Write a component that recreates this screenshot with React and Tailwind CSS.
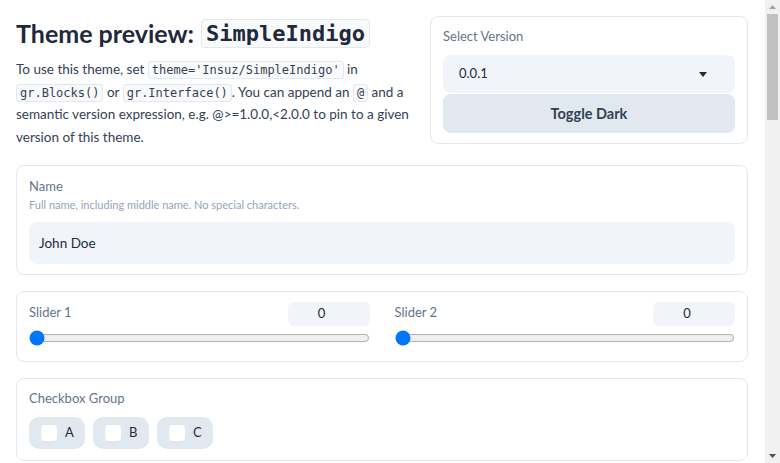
import React from "react";

const font = { fontFamily: "Lato, 'Noto Sans', sans-serif" };

function Code({ children, big }) {
  return (
    <code
      className={
        big
          ? "inline-block rounded-[4px] border border-[#e2e8f0] bg-[#f8fafc] px-[4px] text-[22px] leading-[27px] font-semibold text-[#1e293b]"
          : "rounded-[3px] border border-[#e2e8f0] bg-[#f8fafc] px-[3px] py-[1px] text-[12px] leading-[14px] text-[#374151]"
      }
      style={{ fontFamily: "'DejaVu Sans Mono', 'Liberation Mono', monospace" }}
    >
      {children}
    </code>
  );
}

function Card({ children, className = "" }) {
  return (
    <div className={"rounded-lg border border-[#e2e8f0] bg-white " + className}>
      {children}
    </div>
  );
}

function Label({ children }) {
  return <div className="text-[13px] leading-5 text-[#64748b]">{children}</div>;
}

function SliderBlock({ label }) {
  return (
    <div className="flex flex-col">
      <div className="flex h-6 items-start justify-between">
        <Label>{label}</Label>
        <div className="flex h-6 w-[82px] items-center justify-center rounded-md bg-[#f1f5f9] pr-[14px] text-[13px] text-[#1e293b]">
          0
        </div>
      </div>
      <input
        type="range"
        min="0"
        max="100"
        defaultValue="0"
        className="m-0 mt-1 block h-4 w-full"
      />
    </div>
  );
}

function Chip({ letter }) {
  return (
    <div className="flex h-8 w-14 items-center gap-2 rounded-[10px] bg-[#e2e8f0] pl-3">
      <div className="h-4 w-4 rounded-[4px] bg-white" />
      <span className="text-[13px] text-[#1e293b]">{letter}</span>
    </div>
  );
}

export default function App() {
  return (
    <div className="flex h-[463px] w-[780px] overflow-hidden bg-white" style={font}>
      <main className="flex w-[765px] flex-col gap-4 pl-4 pr-[17px] pt-4">
        <div className="grid grid-cols-[398px_318px] items-start gap-4">
          <div className="h-[133px]">
            <h1 className="flex h-[35px] items-center gap-[7px] text-[25px] font-bold text-[#1e293b]">
              <span>Theme preview:</span>
              <Code big>SimpleIndigo</Code>
            </h1>
            <p className="mt-[7px] text-[13.5px] leading-[22.7px] text-[#334155]">
              To use this theme, set <Code>theme='Insuz/SimpleIndigo'</Code> in
              <br />
              <Code>gr.Blocks()</Code> or <Code>gr.Interface()</Code>. You can append an{" "}
              <Code>@</Code> and a
              <br />
              semantic version expression, e.g. @&gt;=1.0.0,&lt;2.0.0 to pin to a given
              <br />
              version of this theme.
            </p>
          </div>
          <Card className="px-3 pb-[10px] pt-[9px]">
            <Label>Select Version</Label>
            <div className="mt-[9px] flex h-[38px] items-center justify-between rounded-lg bg-[#f1f5f9] pl-4 pr-7 text-[13px] text-[#1e293b]">
              <span>0.0.1</span>
              <svg width="8" height="5" viewBox="0 0 8 5">
                <path d="M0 0 L8 0 L4 5 Z" fill="#1e293b" />
              </svg>
            </div>
            <button className="mt-px flex h-[39px] w-full items-center justify-center rounded-lg bg-[#e2e8f0] text-[14.5px] font-bold text-[#334155]">
              Toggle Dark
            </button>
          </Card>
        </div>

        <Card className="px-3 pb-[10px] pt-[10px]">
          <Label>Name</Label>
          <div className="mt-[2px] text-[11px] leading-[14px] text-[#94a3b8]">
            Full name, including middle name. No special characters.
          </div>
          <div className="mt-[10px] flex h-[42px] items-center rounded-lg bg-[#f1f5f9] px-[10px] text-[13.5px] text-[#1e293b]">
            John Doe
          </div>
        </Card>

        <Card className="grid grid-cols-2 gap-[25px] px-3 pb-[15px] pt-[10px]">
          <SliderBlock label="Slider 1" />
          <SliderBlock label="Slider 2" />
        </Card>

        <Card className="px-3 pb-[11px] pt-[9px]">
          <Label>Checkbox Group</Label>
          <div className="mt-[9px] flex gap-2">
            <Chip letter="A" />
            <Chip letter="B" />
            <Chip letter="C" />
          </div>
        </Card>
      </main>

      <div className="ml-auto flex h-full w-[15px] flex-col items-center bg-[#f1f1f1]">
        <div className="flex h-[14px] items-center justify-center">
          <svg width="7" height="4" viewBox="0 0 7 4">
            <path d="M0 4 L7 4 L3.5 0 Z" fill="#a3a3a3" />
          </svg>
        </div>
        <div className="h-[106px] w-[11px] bg-[#c1c1c1]" />
        <div className="flex-1" />
        <div className="flex h-[14px] items-center justify-center">
          <svg width="7" height="4" viewBox="0 0 7 4">
            <path d="M0 0 L7 0 L3.5 4 Z" fill="#505050" />
          </svg>
        </div>
      </div>
    </div>
  );
}
